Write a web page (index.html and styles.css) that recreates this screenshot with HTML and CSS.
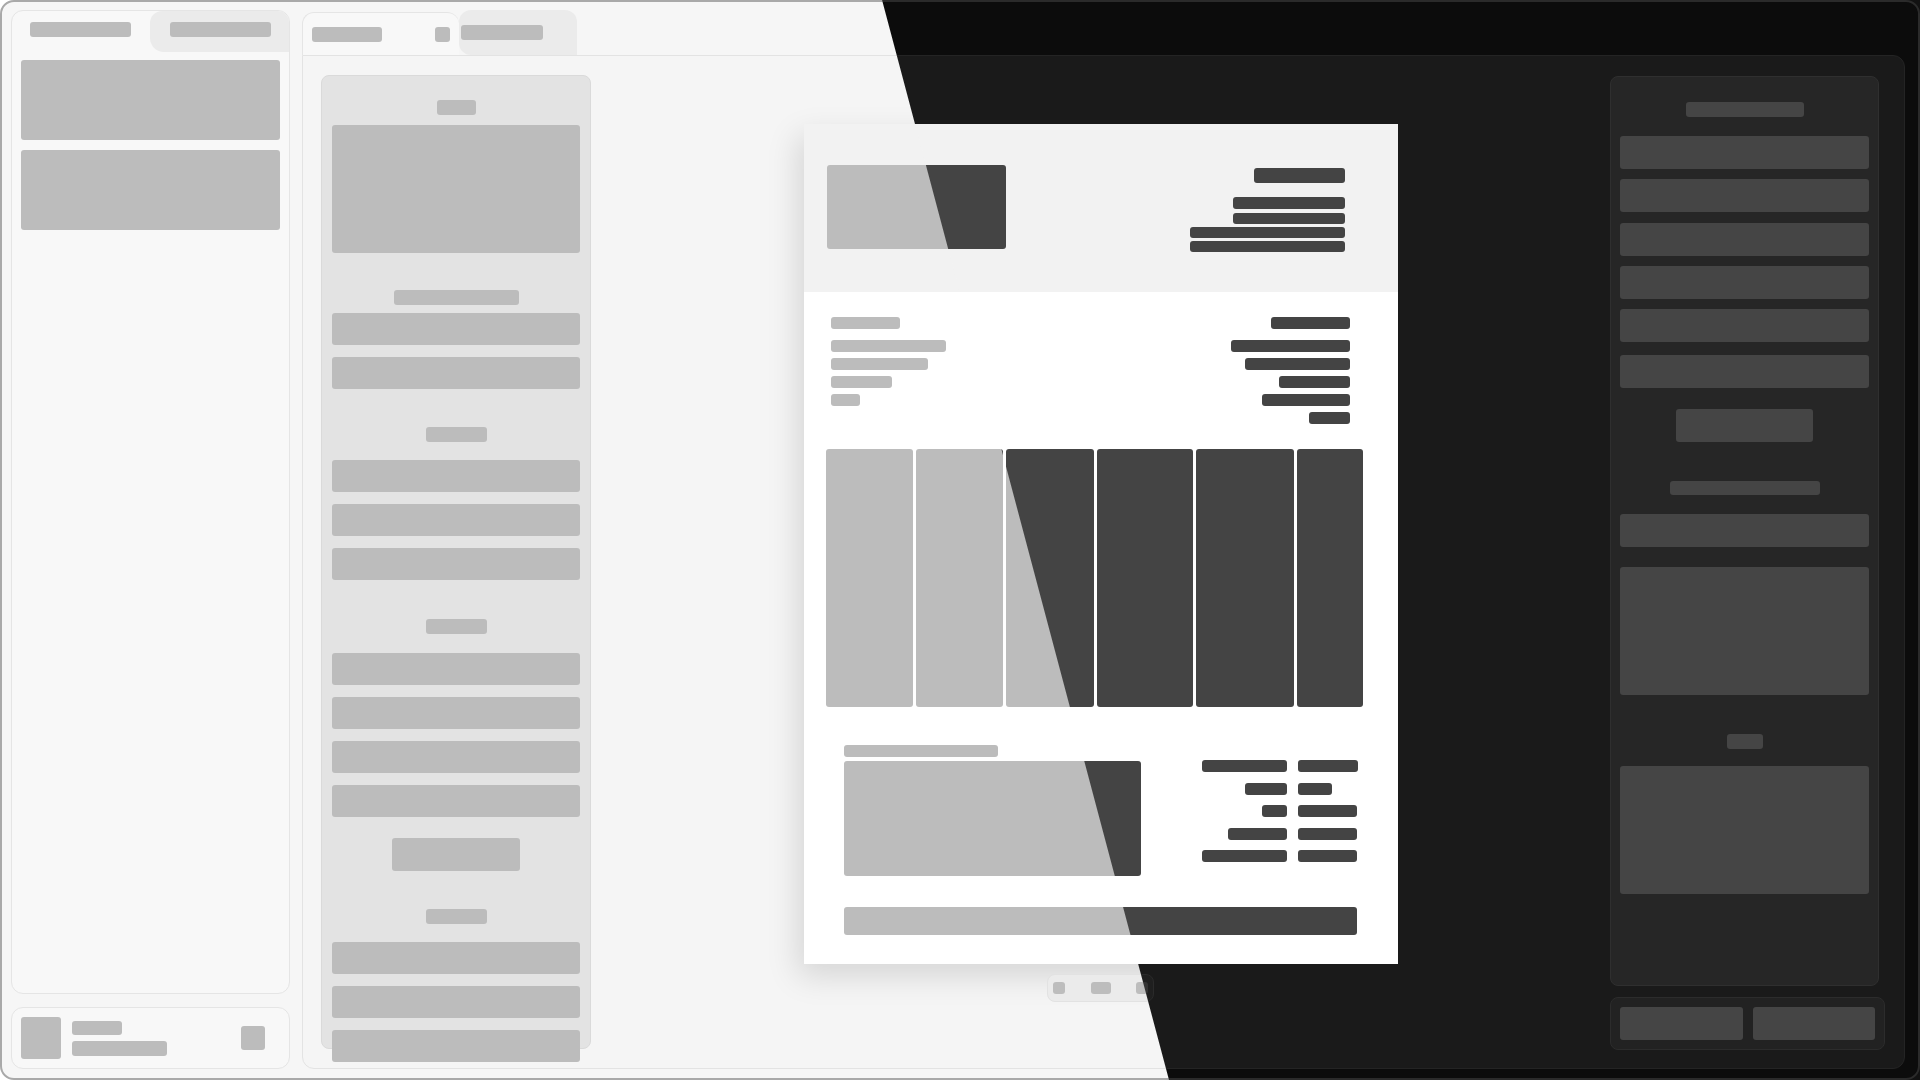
FILE: index.html
```html
<!DOCTYPE html>
<html lang="en">
<head>
<meta charset="utf-8">
<title>Theme switch preview</title>
<link rel="stylesheet" href="styles.css">
</head>
<body>
<div class="scene">

  <!-- LIGHT THEME LAYER -->
  <div class="layer theme-light">
    <div class="window">
      <aside class="sidebar">
        <div class="side-panel">
          <div class="side-tabs">
            <div class="side-tab tab-on"><span class="blk tab-bar"></span></div>
            <div class="side-tab tab-off"><span class="blk tab-bar"></span></div>
          </div>
          <div class="side-body">
            <div class="blk side-block"></div>
            <div class="blk side-block"></div>
          </div>
        </div>
        <div class="user-card">
          <div class="blk avatar"></div>
          <div class="user-lines"><span class="blk ul-1"></span><span class="blk ul-2"></span></div>
          <div class="blk user-icon"></div>
        </div>
      </aside>
      <main class="main">
        <div class="main-tabs">
          <div class="mtab mtab-on"><span class="blk mt-bar1"></span><span class="blk mt-sq"></span></div>
          <div class="mtab mtab-off"><span class="blk mt-bar2"></span></div>
        </div>
        <div class="main-body">
          <section class="col-left">
            <span class="blk lbl w39"></span>
            <div class="blk hero mt10"></div>
            <span class="blk lbl w125 mt37"></span>
            <div class="blk row mt8"></div>
            <div class="blk row mt12"></div>
            <span class="blk lbl w61 mt38"></span>
            <div class="blk row mt18"></div>
            <div class="blk row mt12"></div>
            <div class="blk row mt12"></div>
            <span class="blk lbl w61 mt39"></span>
            <div class="blk row mt19"></div>
            <div class="blk row mt12"></div>
            <div class="blk row mt12"></div>
            <div class="blk row mt12"></div>
            <div class="blk btn w128 mt21"></div>
            <span class="blk lbl w61 mt38"></span>
            <div class="blk row mt18"></div>
            <div class="blk row mt12"></div>
            <div class="blk row mt12"></div>
          </section>
          <section class="stage">
            <article class="invoice">
              <header class="inv-head">
                <div class="ink logo"></div>
                <div class="head-lines">
                  <span class="ink hl-1"></span>
                  <span class="ink hl-2"></span>
                  <span class="ink hl-3"></span>
                  <span class="ink hl-4"></span>
                  <span class="ink hl-5"></span>
                </div>
              </header>
              <div class="inv-bill">
                <div class="bill-from">
                  <span class="ink bl w69"></span>
                  <span class="ink bl w115 mt11"></span>
                  <span class="ink bl w97 mt6"></span>
                  <span class="ink bl w61 mt6"></span>
                  <span class="ink bl w29 mt6"></span>
                </div>
                <div class="bill-to">
                  <span class="ink bl w79"></span>
                  <span class="ink bl w119 mt11"></span>
                  <span class="ink bl w105 mt6"></span>
                  <span class="ink bl w71 mt6"></span>
                  <span class="ink bl w88 mt6"></span>
                  <span class="ink bl w41 mt6"></span>
                </div>
              </div>
              <div class="inv-table">
                <div class="ink cell"></div><div class="ink cell"></div><div class="ink cell"></div>
                <div class="ink cell"></div><div class="ink cell"></div><div class="ink cell"></div>
              </div>
              <div class="inv-summary">
                <div class="notes">
                  <span class="ink notes-label"></span>
                  <div class="ink notes-box"></div>
                </div>
                <div class="totals">
                  <span class="ink tl w85"></span><span class="ink tr w60"></span>
                  <span class="ink tl w42"></span><span class="ink tr w34"></span>
                  <span class="ink tl w25"></span><span class="ink tr w59"></span>
                  <span class="ink tl w59"></span><span class="ink tr w59"></span>
                  <span class="ink tl w85"></span><span class="ink tr w59"></span>
                </div>
              </div>
              <div class="ink inv-total"></div>
            </article>
            <div class="pager"><span class="dot"></span><span class="dot dot-wide"></span><span class="dot"></span></div>
          </section>
          <section class="col-right">
            <div class="right-panel">
              <span class="blk lbl w118"></span>
              <div class="blk row r33 mt19"></div>
              <div class="blk row r33 mt10"></div>
              <div class="blk row r33 mt11"></div>
              <div class="blk row r33 mt10"></div>
              <div class="blk row r33 mt10"></div>
              <div class="blk row r33 mt13"></div>
              <div class="blk btn w137 mt21"></div>
              <span class="blk lbl w150 h14 mt39"></span>
              <div class="blk row r33 mt19"></div>
              <div class="blk hero mt20"></div>
              <span class="blk lbl w36 mt39"></span>
              <div class="blk hero mt17"></div>
            </div>
            <div class="action-card"><span class="blk action"></span><span class="blk action"></span></div>
          </section>
        </div>
      </main>
    </div>
  </div>

  <!-- DARK THEME LAYER (revealed by the diagonal wipe) -->
  <div class="layer theme-dark" aria-hidden="true">
    <div class="window">
      <aside class="sidebar">
        <div class="side-panel">
          <div class="side-tabs">
            <div class="side-tab tab-on"><span class="blk tab-bar"></span></div>
            <div class="side-tab tab-off"><span class="blk tab-bar"></span></div>
          </div>
          <div class="side-body">
            <div class="blk side-block"></div>
            <div class="blk side-block"></div>
          </div>
        </div>
        <div class="user-card">
          <div class="blk avatar"></div>
          <div class="user-lines"><span class="blk ul-1"></span><span class="blk ul-2"></span></div>
          <div class="blk user-icon"></div>
        </div>
      </aside>
      <main class="main">
        <div class="main-tabs">
          <div class="mtab mtab-on"><span class="blk mt-bar1"></span><span class="blk mt-sq"></span></div>
          <div class="mtab mtab-off"><span class="blk mt-bar2"></span></div>
        </div>
        <div class="main-body">
          <section class="col-left">
            <span class="blk lbl w39"></span>
            <div class="blk hero mt10"></div>
            <span class="blk lbl w125 mt37"></span>
            <div class="blk row mt8"></div>
            <div class="blk row mt12"></div>
            <span class="blk lbl w61 mt38"></span>
            <div class="blk row mt18"></div>
            <div class="blk row mt12"></div>
            <div class="blk row mt12"></div>
            <span class="blk lbl w61 mt39"></span>
            <div class="blk row mt19"></div>
            <div class="blk row mt12"></div>
            <div class="blk row mt12"></div>
            <div class="blk row mt12"></div>
            <div class="blk btn w128 mt21"></div>
            <span class="blk lbl w61 mt38"></span>
            <div class="blk row mt18"></div>
            <div class="blk row mt12"></div>
            <div class="blk row mt12"></div>
          </section>
          <section class="stage">
            <article class="invoice">
              <header class="inv-head">
                <div class="ink logo"></div>
                <div class="head-lines">
                  <span class="ink hl-1"></span>
                  <span class="ink hl-2"></span>
                  <span class="ink hl-3"></span>
                  <span class="ink hl-4"></span>
                  <span class="ink hl-5"></span>
                </div>
              </header>
              <div class="inv-bill">
                <div class="bill-from">
                  <span class="ink bl w69"></span>
                  <span class="ink bl w115 mt11"></span>
                  <span class="ink bl w97 mt6"></span>
                  <span class="ink bl w61 mt6"></span>
                  <span class="ink bl w29 mt6"></span>
                </div>
                <div class="bill-to">
                  <span class="ink bl w79"></span>
                  <span class="ink bl w119 mt11"></span>
                  <span class="ink bl w105 mt6"></span>
                  <span class="ink bl w71 mt6"></span>
                  <span class="ink bl w88 mt6"></span>
                  <span class="ink bl w41 mt6"></span>
                </div>
              </div>
              <div class="inv-table">
                <div class="ink cell"></div><div class="ink cell"></div><div class="ink cell"></div>
                <div class="ink cell"></div><div class="ink cell"></div><div class="ink cell"></div>
              </div>
              <div class="inv-summary">
                <div class="notes">
                  <span class="ink notes-label"></span>
                  <div class="ink notes-box"></div>
                </div>
                <div class="totals">
                  <span class="ink tl w85"></span><span class="ink tr w60"></span>
                  <span class="ink tl w42"></span><span class="ink tr w34"></span>
                  <span class="ink tl w25"></span><span class="ink tr w59"></span>
                  <span class="ink tl w59"></span><span class="ink tr w59"></span>
                  <span class="ink tl w85"></span><span class="ink tr w59"></span>
                </div>
              </div>
              <div class="ink inv-total"></div>
            </article>
            <div class="pager"><span class="dot"></span><span class="dot dot-wide"></span><span class="dot"></span></div>
          </section>
          <section class="col-right">
            <div class="right-panel">
              <span class="blk lbl w118"></span>
              <div class="blk row r33 mt19"></div>
              <div class="blk row r33 mt10"></div>
              <div class="blk row r33 mt11"></div>
              <div class="blk row r33 mt10"></div>
              <div class="blk row r33 mt10"></div>
              <div class="blk row r33 mt13"></div>
              <div class="blk btn w137 mt21"></div>
              <span class="blk lbl w150 h14 mt39"></span>
              <div class="blk row r33 mt19"></div>
              <div class="blk hero mt20"></div>
              <span class="blk lbl w36 mt39"></span>
              <div class="blk hero mt17"></div>
            </div>
            <div class="action-card"><span class="blk action"></span><span class="blk action"></span></div>
          </section>
        </div>
      </main>
    </div>
  </div>

</div>
</body>
</html>
```
FILE: styles.css
```css
* { box-sizing: border-box; }

html, body {
  margin: 0;
  padding: 0;
  width: 1920px;
  height: 1080px;
  overflow: hidden;
  font-family: "Liberation Sans", Arial, sans-serif;
}

.scene {
  position: relative;
  width: 1920px;
  height: 1080px;
}

/* ---------- themes ---------- */
.theme-light {
  --outside: #ffffff;
  --frame: #f6f6f6;
  --frame-border: #a9a9a9;
  --panel: #f8f8f8;
  --panel-border: #e5e5e5;
  --tab-off: #ebebeb;
  --body: #f5f5f5;
  --body-border: #e3e3e3;
  --col: #e3e3e3;
  --col-border: #dadada;
  --card: #f3f3f3;
  --card-border: #e3e3e3;
  --block: #bcbcbc;
  --ink: #bcbcbc;
  --pill: #ebebeb;
  --pill-border: #e2e2e2;
  --pill-dot: #bdbdbd;
  --doc-shadow: -6px 12px 30px rgba(0, 0, 0, 0.13);
}

.theme-dark {
  --outside: #121212;
  --frame: #0c0c0c;
  --frame-border: #2b2b2b;
  --panel: #1f1f1f;
  --panel-border: #2a2a2a;
  --tab-off: #161616;
  --body: #1a1a1a;
  --body-border: #242424;
  --col: #262626;
  --col-border: #2f2f2f;
  --card: #222222;
  --card-border: #2c2c2c;
  --block: #454545;
  --ink: #444444;
  --pill: #1f1f1f;
  --pill-border: #2a2a2a;
  --pill-dot: #333333;
  --doc-shadow: none;
}

.layer {
  position: absolute;
  inset: 0;
  background: var(--outside);
}

/* diagonal wipe from (882,0) to (1169,1080) */
.theme-dark {
  -webkit-mask-image: linear-gradient(75.12deg, transparent 1129.3px, #000 1130.3px);
  mask-image: linear-gradient(75.12deg, transparent 1129.3px, #000 1130.3px);
}

/* ---------- window ---------- */
.window {
  width: 1920px;
  height: 1080px;
  border: 2px solid var(--frame-border);
  border-radius: 14px;
  background: var(--frame);
  padding: 8px 13px 9px 9px;
  display: flex;
  gap: 12px;
}

.blk { display: block; background: var(--block); border-radius: 3px; }
.ink { display: block; background: var(--ink); border-radius: 3px; }

/* ---------- sidebar ---------- */
.sidebar {
  width: 279px;
  flex: none;
  display: flex;
  flex-direction: column;
  gap: 13px;
}

.side-panel {
  flex: 1;
  background: var(--panel);
  border: 1px solid var(--panel-border);
  border-radius: 12px;
  overflow: hidden;
}

.side-tabs {
  display: flex;
  height: 41px;
}

.side-tab {
  display: flex;
  align-items: flex-start;
  padding-top: 11px;
}

.side-tab.tab-on { width: 138px; padding-left: 18px; }
.side-tab.tab-off {
  flex: 1;
  padding-left: 20px;
  background: var(--tab-off);
  border-radius: 12px 11px 0 14px;
}

.tab-bar { width: 101px; height: 15px; }

.side-body {
  padding: 8px 9px;
  display: flex;
  flex-direction: column;
  gap: 10px;
}

.side-block { height: 80px; }

.user-card {
  height: 62px;
  flex: none;
  background: var(--panel);
  border: 1px solid var(--panel-border);
  border-radius: 12px;
  padding: 0 24px 0 9px;
  display: flex;
  align-items: center;
}

.avatar { width: 40px; height: 42px; }

.user-lines {
  margin-left: 11px;
  display: flex;
  flex-direction: column;
  gap: 6px;
}
.ul-1 { width: 50px; height: 14px; }
.ul-2 { width: 95px; height: 15px; }

.user-icon { width: 24px; height: 24px; margin-left: auto; }

/* ---------- main ---------- */
.main {
  flex: 1;
  display: flex;
  flex-direction: column;
}

.main-tabs {
  display: flex;
  height: 43px;
  margin-top: 2px;
}

.mtab { display: flex; align-items: center; }

.mtab-on {
  width: 157px;
  padding: 0 9px;
  justify-content: space-between;
  background: var(--panel);
  border: 1px solid var(--panel-border);
  border-bottom: none;
  border-right: none;
  border-radius: 12px 12px 0 0;
}

.mtab-off {
  width: 118px;
  padding-left: 2px;
  background: var(--tab-off);
  border-radius: 12px 12px 0 12px;
  margin-top: -2px;
  height: 45px;
}

.mt-bar1 { width: 70px; height: 15px; }
.mt-sq { width: 15px; height: 15px; }
.mt-bar2 { width: 82px; height: 15px; }

.main-body {
  flex: 1;
  background: var(--body);
  border: 1px solid var(--body-border);
  border-radius: 0 12px 12px 12px;
  padding: 19px 19px 18px 18px;
  display: flex;
}

/* left column (scrolling settings list) */
.col-left {
  width: 270px;
  height: 974px;
  flex: none;
  align-self: flex-start;
  background: var(--col);
  border: 1px solid var(--col-border);
  border-radius: 8px;
  padding: 24px 10px 0;
  display: flex;
  flex-direction: column;
  align-items: center;
}

.lbl { height: 15px; flex: none; }
.row { width: 100%; height: 32px; flex: none; }
.row.r33 { height: 33px; }
.hero { width: 100%; height: 128px; flex: none; }
.btn { height: 33px; flex: none; }

.w36 { width: 36px; }
.w39 { width: 39px; }
.w61 { width: 61px; }
.w118 { width: 118px; }
.w125 { width: 125px; }
.w128 { width: 128px; }
.w137 { width: 137px; }
.w150 { width: 150px; }
.h14 { height: 14px; }

.mt6 { margin-top: 6px; }
.mt8 { margin-top: 8px; }
.mt10 { margin-top: 10px; }
.mt11 { margin-top: 11px; }
.mt12 { margin-top: 12px; }
.mt13 { margin-top: 13px; }
.mt17 { margin-top: 17px; }
.mt18 { margin-top: 18px; }
.mt19 { margin-top: 19px; }
.mt20 { margin-top: 20px; }
.mt21 { margin-top: 21px; }
.mt36 { margin-top: 36px; }
.mt37 { margin-top: 37px; }
.mt38 { margin-top: 38px; }
.mt39 { margin-top: 39px; }

/* centre stage */
.stage {
  flex: 1;
  display: flex;
  flex-direction: column;
  align-items: center;
  padding-top: 49px;
}

.invoice {
  width: 594px;
  height: 840px;
  flex: none;
  background: #ffffff;
  box-shadow: var(--doc-shadow);
  display: flex;
  flex-direction: column;
}

.inv-head {
  height: 168px;
  flex: none;
  background: #f2f2f2;
  padding: 41px 53px 0 23px;
  display: flex;
  justify-content: space-between;
  align-items: flex-start;
}

.logo { width: 179px; height: 84px; }

.head-lines {
  display: flex;
  flex-direction: column;
  align-items: flex-end;
  padding-top: 3px;
}
.hl-1 { width: 91px; height: 15px; }
.hl-2 { width: 112px; height: 12px; margin-top: 14px; }
.hl-3 { width: 112px; height: 11px; margin-top: 4px; }
.hl-4 { width: 155px; height: 11px; margin-top: 3px; }
.hl-5 { width: 155px; height: 11px; margin-top: 3px; }

.inv-bill {
  padding: 25px 48px 0 27px;
  display: flex;
  justify-content: space-between;
}

.bill-from { display: flex; flex-direction: column; align-items: flex-start; }
.bill-to { display: flex; flex-direction: column; align-items: flex-end; }

.bl { height: 12px; }
.w29 { width: 29px; }
.w41 { width: 41px; }
.w69 { width: 69px; }
.w71 { width: 71px; }
.w79 { width: 79px; }
.w88 { width: 88px; }
.w97 { width: 97px; }
.w105 { width: 105px; }
.w115 { width: 115px; }
.w119 { width: 119px; }

.inv-table {
  margin: 25px 35px 0 22px;
  height: 258px;
  display: grid;
  grid-template-columns: 87fr 87fr 88fr 96fr 98fr 65fr;
  gap: 3px;
}

.cell { border-radius: 3px; }

.inv-summary {
  margin-top: 38px;
  padding: 0 40px;
  display: flex;
  justify-content: space-between;
  align-items: flex-start;
}

.notes-label { width: 154px; height: 12px; }
.notes-box { width: 297px; height: 115px; margin-top: 4px; }

.totals {
  margin-top: 15px;
  display: grid;
  grid-template-columns: 85px 60px;
  column-gap: 11px;
  row-gap: 10.5px;
}
.tl { justify-self: end; height: 12px; }
.tr { justify-self: start; height: 12px; }
.w25 { width: 25px; }
.w34 { width: 34px; }
.w42 { width: 42px; }
.w59 { width: 59px; }
.w60 { width: 60px; }
.w85 { width: 85px; }

.inv-total {
  margin: 31px 41px 0 40px;
  height: 28px;
}

.pager {
  margin-top: 10px;
  width: 107px;
  height: 28px;
  background: var(--pill);
  border: 1px solid var(--pill-border);
  border-radius: 8px;
  padding: 0 5px 0 5px;
  display: flex;
  align-items: center;
  justify-content: space-between;
}

.dot { width: 12px; height: 12px; border-radius: 3px; background: var(--pill-dot); }
.dot-wide { width: 20px; }

/* right column (inspector) */
.col-right {
  width: 275px;
  flex: none;
  padding-top: 1px;
  display: flex;
  flex-direction: column;
  gap: 11px;
}

.right-panel {
  flex: 1;
  width: 269px;
  background: var(--col);
  border: 1px solid var(--col-border);
  border-radius: 8px;
  padding: 25px 9px 0;
  display: flex;
  flex-direction: column;
  align-items: center;
}

.action-card {
  height: 53px;
  flex: none;
  background: var(--card);
  border: 1px solid var(--card-border);
  border-radius: 8px;
  padding: 0 9px;
  display: flex;
  align-items: center;
  gap: 10px;
}

.action { flex: 1; height: 33px; }
```
